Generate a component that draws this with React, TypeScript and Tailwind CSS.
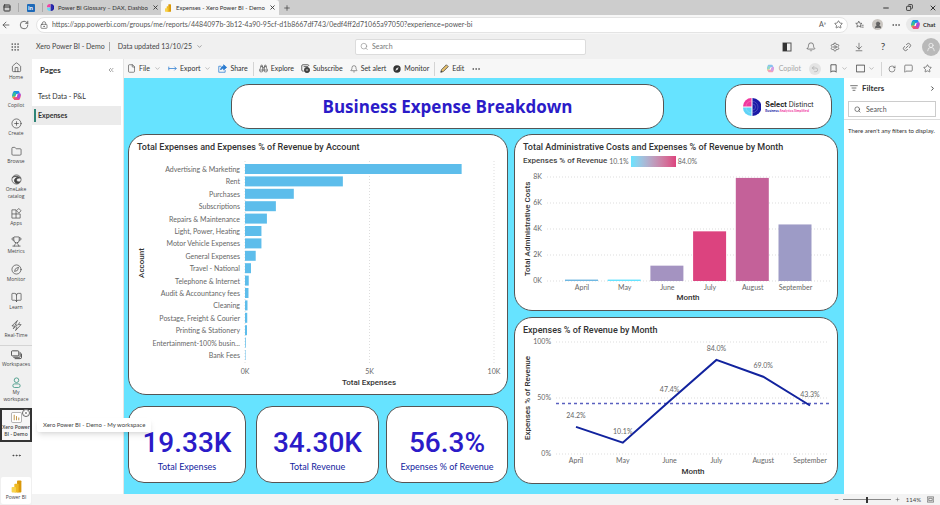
import type { ReactNode } from 'react'
import {
  ArrowDownToLine,
  ArrowLeft,
  Bell,
  Binoculars,
  BookOpen,
  ChevronDown,
  ChevronRight,
  ChevronsLeft,
  CirclePlus,
  Compass,
  Copy,
  File,
  Folder,
  Grip,
  House,
  Link2,
  ListFilter,
  LockKeyhole,
  MessageSquare,
  Minus,
  MoreHorizontal,
  PanelTop,
  Plus,
  RotateCw,
  Search,
  Settings,
  Star,
  Trophy,
  Undo2,
  UserRound,
  X,
} from 'lucide-react'

const accounts = [
  { name: 'Advertising & Marketing', value: 8700 },
  { name: 'Rent', value: 3930 },
  { name: 'Purchases', value: 1960 },
  { name: 'Subscriptions', value: 1240 },
  { name: 'Repairs & Maintenance', value: 880 },
  { name: 'Light, Power, Heating', value: 660 },
  { name: 'Motor Vehicle Expenses', value: 660 },
  { name: 'General Expenses', value: 430 },
  { name: 'Travel - National', value: 240 },
  { name: 'Telephone & Internet', value: 150 },
  { name: 'Audit & Accountancy fees', value: 140 },
  { name: 'Cleaning', value: 100 },
  { name: 'Postage, Freight & Courier', value: 90 },
  { name: 'Printing & Stationery', value: 80 },
  { name: 'Entertainment-100% busin...', value: 30 },
  { name: 'Bank Fees', value: 20 },
]

const months = [
  { name: 'April', cost: 110, percent: 24.2, color: '#6fb8e2' },
  { name: 'May', cost: 110, percent: 10.1, color: '#66e3ff' },
  { name: 'June', cost: 1180, percent: 47.4, color: '#a493c1' },
  { name: 'July', cost: 3820, percent: 84, color: '#dc437f' },
  { name: 'August', cost: 7930, percent: 69, color: '#c46199' },
  { name: 'September', cost: 4350, percent: 43.3, color: '#9d9bc6' },
]

function CopilotIcon({ className }: { className: string }) {
  return (
    <svg viewBox="0 0 24 24" className={className} aria-hidden="true">
      <path d="M8 2h7c2 0 3 1 3.500 3l.8 3h-5L12 14H3c-1-2 0-5 1-8s2-4 4-4Z" fill="#1b8fe8" />
      <path d="M3 13 6 5l5 1-3 11H5c-2 0-3-2-2-4Z" fill="#35c38f" />
      <path d="M3 14h7l-2 6c-3 0-5-2-5-6Z" fill="#f3b52c" />
      <path d="M16 22H9c-2 0-3-1-3.500-3l-.8-3h5l2.300-6h9c1 2 0 5-1 8s-2 4-4 4Z" fill="#ee4f7e" />
      <path d="m21 11-3 8-5-1 3-11h3c2 0 3 2 2 4Z" fill="#a64be0" />
      <path d="M11 9h3l-1.500 6h-3Z" fill="#fff" />
    </svg>
  )
}

function PowerBiIcon({ className }: { className: string }) {
  return (
    <svg viewBox="0 0 24 24" className={className} aria-hidden="true">
      <rect x="13" y="1" width="8" height="22" rx="1.500" fill="#d9980a" />
      <rect x="8" y="7" width="8" height="16" rx="1.500" fill="#efb820" />
      <rect x="3" y="13" width="8" height="10" rx="1.500" fill="#f8d34c" />
    </svg>
  )
}

function DistinctIcon({ className }: { className: string }) {
  return (
    <svg viewBox="0 0 18 18" className={className} aria-hidden="true">
      <path d="M8.500 0v8.500H0A8.500 8.500 0 0 1 8.500 0Z" fill="#f0399f" />
      <path d="M8.500 9.500V18A8.500 8.500 0 0 1 0 9.500Z" fill="#5fd3f7" />
      <path d="M9.500 0a9 9 0 0 1 0 18Z" fill="#1b1aa6" />
      <path
        d="M3 8.500A5.500 5.500 0 0 1 8.500 3M3 9.500A5.500 5.500 0 0 0 8.500 15M9.500 3.500a5.500 5.500 0 0 1 0 11M9.500 6a3 3 0 0 1 0 6"
        fill="none"
        stroke="#fff"
        strokeOpacity="0.4"
        strokeWidth="0.5"
      />
    </svg>
  )
}

function LineIcon({ className, children }: { className: string; children: ReactNode }) {
  return (
    <svg
      viewBox="0 0 24 24"
      className={className}
      fill="none"
      stroke="currentColor"
      strokeWidth="2"
      strokeLinejoin="round"
      aria-hidden="true"
    >
      {children}
    </svg>
  )
}

function BrowserTabs() {
  return (
    <div className="flex h-[15px] items-center bg-[#cdcdcd] text-[6px] text-[#333]">
      <button aria-label="Tab actions" className="flex w-[18px] pl-[3px]">
        <PanelTop className="size-2" strokeWidth={3} />
      </button>
      <span className="h-[9px] w-px bg-[#aaa]" />
      <button aria-label="LinkedIn" className="flex w-[23px] justify-center">
        <span className="flex size-2 items-center justify-center rounded-[1px] bg-[#1d69b8] text-[6px] leading-none font-bold text-white">
          in
        </span>
      </button>
      <span className="h-[9px] w-px bg-[#aaa]" />
      <div className="flex w-[118px] items-center gap-1 pl-1">
        <DistinctIcon className="size-[7px] shrink-0" />
        <span className="flex-1 whitespace-nowrap">Power BI Glossary – DAX, Dashbo</span>
        <button aria-label="Close tab" className="mr-1">
          <X className="size-[7px]" strokeWidth={3} />
        </button>
      </div>
      <div className="flex h-full w-[118px] items-center gap-1 rounded-t-[3px] bg-[#f7f7f7] pl-[3px]">
        <PowerBiIcon className="size-2 shrink-0" />
        <span className="flex-1 whitespace-nowrap">Expenses - Xero Power BI - Demo</span>
        <button aria-label="Close tab" className="mr-1">
          <X className="size-[7px]" strokeWidth={3} />
        </button>
      </div>
      <button aria-label="New tab" className="ml-1">
        <Plus className="size-2" />
      </button>
      <div className="ml-auto flex items-center gap-4 pr-[3px]">
        <button aria-label="Minimise">
          <Minus className="size-2" strokeWidth={3} />
        </button>
        <button aria-label="Restore">
          <Copy className="size-[7px] -scale-x-100" strokeWidth={3} />
        </button>
        <button aria-label="Close">
          <X className="size-2" strokeWidth={3} />
        </button>
      </div>
    </div>
  )
}

function AddressBar() {
  return (
    <div className="flex h-[19px] items-center bg-[#f7f7f7] text-[#555]">
      <button aria-label="Back" className="ml-px">
        <ArrowLeft className="size-[10px]" />
      </button>
      <button aria-label="Refresh" className="ml-2">
        <RotateCw className="size-[10px]" />
      </button>
      <div className="ml-[7px] flex h-4 flex-1 items-center rounded-full border border-[#e4e4e4] bg-white pr-1 pl-[3px]">
        <LockKeyhole className="size-2" />
        <input
          aria-label="Address"
          readOnly
          value="https://app.powerbi.com/groups/me/reports/4484097b-3b12-4a90-95cf-d1b8667df743/0edf4ff2d71065a97050?experience=power-bi"
          className="ml-1 flex-1 text-[7px] outline-none"
        />
        <span className="mr-2 text-[7px]">
          A<sup>»</sup>
        </span>
        <Star className="size-[9px]" />
      </div>
      <button aria-label="Favourites" className="ml-[7px]">
        <LineIcon className="size-[9px]">
          <path d="m10 3 2.500 5.500 6 .5-4.500 4 1.500 6L10 16l-5 3 1.500-6L2 9l5.500-.5ZM17 14h6M17 19h6" />
        </LineIcon>
      </button>
      <button aria-label="Profile" className="ml-2 flex size-[11px] items-center justify-center rounded-full bg-[#c9c5c0]">
        <UserRound className="size-2 fill-[#666]" />
      </button>
      <button aria-label="More" className="ml-2">
        <MoreHorizontal className="size-[10px]" />
      </button>
      <button className="ml-[5px] flex h-[15px] w-[34px] items-center gap-[2px] rounded-l-full bg-[#e9e9e9] pl-1 text-[6px] font-bold text-[#333]">
        <CopilotIcon className="size-[11px]" />
        Chat
      </button>
    </div>
  )
}

function AppHeader() {
  return (
    <header className="flex h-[25px] items-center bg-[#f0f0f0] text-[7px] text-[#444] [&_.lucide]:stroke-[1.5]">
      <div className="flex flex-1 items-center">
        <button aria-label="App launcher" className="ml-[10px]">
          <Grip className="size-[10px]" />
        </button>
        <span className="ml-4">Xero Power BI - Demo</span>
        <span className="ml-1 h-[9px] w-px bg-[#aaa]" />
        <button className="ml-2 flex items-center gap-1">
          Data updated 13/10/25
          <ChevronDown className="size-[7px]" />
        </button>
      </div>
      <label className="flex h-4 w-1/4 max-w-[231px] items-center gap-1 rounded-[2px] border border-[#dcdcdc] bg-white px-1 text-[#777]">
        <Search className="size-[9px]" />
        <input
          aria-label="Search"
          placeholder="Search"
          className="w-full text-[7px] outline-none placeholder:text-[#777]"
        />
      </label>
      <div className="flex flex-1 items-center justify-end gap-[14px] text-[#444]">
        <button aria-label="Toggle panel">
          <svg viewBox="0 0 10 10" className="size-[10px]">
            <rect x="1" y="1" width="8" height="8" fill="none" stroke="#555" />
            <rect x="1" y="1" width="4" height="8" fill="#333" />
          </svg>
        </button>
        <button aria-label="Notifications">
          <Bell className="size-[10px]" />
        </button>
        <button aria-label="Settings">
          <Settings className="size-[10px]" />
        </button>
        <button aria-label="Download">
          <ArrowDownToLine className="size-[10px]" />
        </button>
        <button className="w-[10px] text-[10px]">?</button>
        <button aria-label="Feedback">
          <Link2 className="size-[10px] -rotate-45" />
        </button>
        <button aria-label="Account" className="-ml-1 flex size-[18px] items-center justify-center rounded-full bg-[#b9b9b9] text-white">
          <UserRound className="size-[10px]" />
        </button>
      </div>
    </header>
  )
}

function NavItem({ icon, label, tall }: { icon: ReactNode; label: string; tall?: boolean }) {
  return (
    <li className={tall ? 'h-[34px]' : 'h-7'}>
      <a href="#" className="flex flex-col items-center gap-px pt-[3px]">
        {icon}
        <span className="text-center leading-[7px]">{label}</span>
      </a>
    </li>
  )
}

function SideNav() {
  return (
    <nav className="flex w-8 shrink-0 flex-col bg-[#f0f0f0] font-['Open_Sans',sans-serif] text-[5px] text-[#444]">
      <ul className="[&_svg]:stroke-[1.5]">
        <NavItem icon={<House className="size-[11px]" />} label="Home" />
        <NavItem icon={<CopilotIcon className="size-[11px]" />} label="Copilot" />
        <NavItem icon={<CirclePlus className="size-[11px]" />} label="Create" />
        <NavItem icon={<Folder className="size-[11px]" />} label="Browse" />
        <NavItem
          tall
          icon={
            <LineIcon className="size-[11px]">
              <circle cx="12" cy="12" r="10" />
              <path d="M3 8c5-5 13-4 18 1-5-1-9 1-9 4s4 5 8 4c-4 5-10 5-12 0S10 8 15 7C11 5 6 5 3 8Z" fill="currentColor" />
            </LineIcon>
          }
          label="OneLake catalog"
        />
        <NavItem
          icon={
            <LineIcon className="size-[11px]">
              <path d="M2 4h9v18H2ZM2 13h18v9h-9M17 1l5 5-5 5-5-5Z" />
            </LineIcon>
          }
          label="Apps"
        />
        <NavItem icon={<Trophy className="size-[11px]" />} label="Metrics" />
        <NavItem icon={<Compass className="size-[11px]" />} label="Monitor" />
        <NavItem icon={<BookOpen className="size-[11px]" />} label="Learn" />
        <NavItem
          icon={
            <LineIcon className="size-[11px]">
              <path d="M14 1 2 13h6l-3 6 9-8H9ZM19 5l-3 5h6L10 23l3-8" />
            </LineIcon>
          }
          label="Real-Time"
        />
      </ul>
      <ul className="border-t border-[#d4d4d4]">
        <NavItem
          icon={
            <LineIcon className="size-[11px]">
              <rect x="1" y="4" width="16" height="11" rx="2" />
              <path d="M5 18h13c2 0 2-1 2-2V7M8 21h12c2 0 3-1 3-3v-8" />
            </LineIcon>
          }
          label="Workspaces"
        />
        <NavItem
          tall
          icon={
            <LineIcon className="size-[11px] text-[#4c9d8b]">
              <circle cx="12" cy="7" r="5" />
              <rect x="4" y="15" width="16" height="8" rx="4" />
            </LineIcon>
          }
          label="My workspace"
        />
      </ul>
      <a
        href="#"
        className="relative flex h-[34px] flex-col items-center gap-px border-2 border-[#333] bg-[#f7f7f7] pt-[2px] font-semibold"
      >
        <svg viewBox="0 0 12 12" className="size-[11px]">
          <rect x="0.500" y="0.500" width="11" height="11" rx="1.500" fill="#fff" stroke="#aaa" />
          <path d="M3.500 9V3M6 9V4.500M8.500 9V6" stroke="#b98d3c" />
        </svg>
        <span className="text-center leading-[7px]">Xero Power BI - Demo</span>
        <span className="absolute -top-px right-0 flex size-2 items-center justify-center rounded-full border border-[#666] bg-white">
          <X className="size-1" strokeWidth={3} />
        </span>
        <span
          role="tooltip"
          className="absolute top-2 left-[35px] z-10 rounded-[2px] bg-white px-[6px] font-[Lato,sans-serif] text-[6px] leading-[14px] font-normal whitespace-nowrap shadow-md"
        >
          Xero Power BI - Demo - My workspace
        </span>
      </a>
      <button aria-label="More" className="mt-2 flex justify-center">
        <MoreHorizontal className="size-[11px]" />
      </button>
      <a href="#" className="mx-px mt-auto mb-px flex h-[27px] flex-col items-center justify-center gap-px rounded-[2px] bg-white leading-[7px]">
        <PowerBiIcon className="size-[13px]" />
        Power BI
      </a>
    </nav>
  )
}

function PagesPane() {
  return (
    <aside className="w-[92px] shrink-0 border-r border-[#e6e6e6] bg-white text-[7px] text-[#333]">
      <div className="flex h-[22px] items-center justify-between pr-2 pl-2">
        <h2 className="text-[8px] font-bold">Pages</h2>
        <button aria-label="Collapse pages">
          <ChevronsLeft className="size-2 text-[#777]" />
        </button>
      </div>
      <ul className="pt-[5px]">
        <li>
          <a href="#" className="flex h-5 items-center pl-[6px]">
            Test Data - P&amp;L
          </a>
        </li>
        <li>
          <a href="#" className="mr-[2px] flex h-[19px] items-center gap-[2px] bg-[#ebebeb] pl-[2px] font-bold">
            <span className="h-[13px] w-[2px] bg-[#2f8577]" />
            Expenses
          </a>
        </li>
      </ul>
    </aside>
  )
}

function Tool({ icon, label, menu }: { icon: ReactNode; label: string; menu?: boolean }) {
  return (
    <button className="flex items-center gap-[3px]">
      {icon}
      {label}
      {menu && <ChevronDown className="ml-px size-[7px] text-[#777]" />}
    </button>
  )
}

function Divider() {
  return <span className="-mx-[2px] h-[14px] w-px bg-[#d4d4d4]" />
}

function Toolbar() {
  return (
    <div className="flex h-[19px] items-center justify-between bg-[#f7f7f7] pr-2 pl-[3px] text-[7px] text-[#333] [&_.lucide]:stroke-[1.5]">
      <div className="flex items-center gap-[7px]">
        <Tool icon={<File className="size-[9px]" />} label="File" menu />
        <Tool
          icon={
            <LineIcon className="size-[9px] text-[#2a7bd0]">
              <path d="M2 7v10M2 12h20M17 7l5 5-5 5" />
            </LineIcon>
          }
          label="Export"
          menu
        />
        <Tool
          icon={
            <LineIcon className="size-[9px] text-[#2a7bd0]">
              <path d="M9 6H2v16h17v-6" />
              <path d="M15 2v4c-5 0-8 4-8 10 2-3 4-4 8-4v4l8-7Z" fill="currentColor" />
            </LineIcon>
          }
          label="Share"
        />
        <Divider />
        <Tool icon={<Binoculars className="size-[9px]" />} label="Explore" />
        <Tool
          icon={
            <LineIcon className="size-[9px]">
              <path d="M7 19H5c-2 0-3-1-3-3V5c0-2 1-3 3-3h13c2 0 3 1 3 3M7 7h12" />
              <circle cx="16" cy="16" r="7" fill="#444" />
              <path d="M13 16h6" stroke="#fff" />
            </LineIcon>
          }
          label="Subscribe"
        />
        <Tool icon={<Bell className="size-2" />} label="Set alert" />
        <Tool
          icon={
            <svg viewBox="0 0 24 24" className="size-2">
              <circle cx="12" cy="12" r="11" fill="#333" />
              <path d="m17 7-3 7-7 3 3-7Z" fill="#ddd" />
            </svg>
          }
          label="Monitor"
        />
        <Divider />
        <Tool
          icon={
            <svg viewBox="0 0 24 24" className="size-[9px]">
              <path d="M2 22 4 15 17 2l5 5L9 20Z" fill="#e5bf6c" stroke="#444" strokeWidth="2" strokeLinejoin="round" />
              <path d="m2 22 1-4 3 3Z" fill="#333" />
            </svg>
          }
          label="Edit"
        />
        <button aria-label="More">
          <MoreHorizontal className="size-[10px]" />
        </button>
      </div>
      <div className="flex items-center gap-2">
        <button disabled className="flex items-center gap-1 text-[#a5a5a5]">
          <CopilotIcon className="size-[9px] opacity-50" />
          Copilot
        </button>
        <button disabled aria-label="Reset" className="flex size-3 items-center justify-center rounded-full bg-[#e4e4e4] text-[#999]">
          <Undo2 className="size-2" />
        </button>
        <button aria-label="Bookmarks" className="flex items-center gap-[3px]">
          <LineIcon className="size-[9px]">
            <path d="M5 2h14v20l-3-3H8l-3 3Z" />
          </LineIcon>
          <ChevronDown className="size-[7px] text-[#777]" />
        </button>
        <button aria-label="View" className="flex items-center gap-[3px]">
          <LineIcon className="size-[9px]">
            <path d="M1 3h22v18H1Z" />
          </LineIcon>
          <ChevronDown className="size-[7px] text-[#777]" />
        </button>
        <Divider />
        <button aria-label="Refresh visuals">
          <RotateCw className="size-2" />
        </button>
        <button aria-label="Comment">
          <MessageSquare className="size-[9px]" />
        </button>
        <button aria-label="Favourite" className="ml-[2px]">
          <Star className="size-[9px]" />
        </button>
      </div>
    </div>
  )
}

function AccountChart() {
  const x = (value: number) => 116 + (value / 10000) * 249

  return (
    <svg viewBox="0 0 378 241" className="block w-full" role="img" aria-label="Total Expenses by Account">
      {[0, 5000, 10000].map((tick) => (
        <g key={tick}>
          <path d={`M${x(tick)} 8V210`} stroke="#ddd" strokeDasharray="1 2" />
          <text x={x(tick)} y="221" textAnchor="middle" fontSize="7" fill="#666">
            {tick / 1000}K
          </text>
        </g>
      ))}
      {accounts.map((account, index) => (
        <g key={account.name}>
          <text x="111" y={19 + index * 12.4} textAnchor="end" fontSize="7" fill="#666">
            {account.name}
          </text>
          <rect x="116" y={11 + index * 12.4} width={x(account.value) - 116} height="10" fill="#5dbdeb" />
        </g>
      ))}
      <g fill="#333" fontFamily="Roboto, sans-serif" fontWeight="500" fontSize="8" textAnchor="middle">
        <text x="240" y="232">
          Total Expenses
        </text>
        <text transform="translate(15 110) rotate(-90)">Account</text>
      </g>
    </svg>
  )
}

function CostChart() {
  const y = (value: number) => 112 - (value / 8000) * 104

  return (
    <svg viewBox="0 0 322 141" className="block w-full" role="img" aria-label="Total Administrative Costs by Month">
      {[0, 2000, 4000, 6000, 8000].map((tick) => (
        <g key={tick}>
          <path d={`M32 ${y(tick)}H315`} stroke="#ddd" strokeDasharray="1 2" />
          <text x="27" y={y(tick) + 2} textAnchor="end" fontSize="7" fill="#666">
            {tick / 1000}K
          </text>
        </g>
      ))}
      {months.map((month, index) => (
        <g key={month.name}>
          <rect x={50 + index * 42.7} y={y(month.cost)} width="33" height={112 - y(month.cost)} fill={month.color} />
          <text x={67 + index * 42.7} y="121" textAnchor="middle" fontSize="7" fill="#666">
            {month.name}
          </text>
        </g>
      ))}
      <g fill="#333" fontFamily="Roboto, sans-serif" fontWeight="500" fontSize="8" textAnchor="middle">
        <text x="173" y="131">
          Month
        </text>
        <text transform="translate(15 60) rotate(-90)">Total Administrative Costs</text>
      </g>
    </svg>
  )
}

function PercentChart() {
  const x = (index: number) => 61 + index * 46.8
  const y = (value: number) => 118 - (value / 100) * 112

  return (
    <svg viewBox="0 0 322 147" className="block w-full" role="img" aria-label="Expenses % of Revenue by Month">
      {[0, 50, 100].map((tick) => (
        <g key={tick}>
          <path d={`M41 ${y(tick)}H314`} stroke="#ddd" strokeDasharray="1 2" />
          <text x="36" y={y(tick) + 2} textAnchor="end" fontSize="7" fill="#666">
            {tick}%
          </text>
        </g>
      ))}
      <path d={`M41 ${y(45)}H314`} stroke="#5a60c0" strokeWidth="1.500" strokeDasharray="3 3" />
      <polyline
        points={months.map((month, index) => `${x(index)},${y(month.percent)}`).join(' ')}
        fill="none"
        stroke="#12239e"
        strokeWidth="2"
      />
      {months.map((month, index) => (
        <g key={month.name} textAnchor="middle" fontSize="7" fill="#666">
          <text x={x(index)} y={y(month.percent) - 9}>
            {month.percent.toFixed(1)}%
          </text>
          <text x={x(index)} y="127">
            {month.name}
          </text>
        </g>
      ))}
      <g fill="#333" fontFamily="Roboto, sans-serif" fontWeight="500" fontSize="8" textAnchor="middle">
        <text x="178" y="138">
          Month
        </text>
        <text transform="translate(15 62) rotate(-90)">Expenses % of Revenue</text>
      </g>
    </svg>
  )
}

function ChartCard({ title, children }: { title: string; children: ReactNode }) {
  return (
    <section className="overflow-hidden rounded-[18px] border border-[#555] bg-white">
      <h3 className="pt-[6px] pl-2 font-[Roboto,sans-serif] text-[9px] leading-3 font-medium text-[#333]">{title}</h3>
      {children}
    </section>
  )
}

function KpiCard({ value, label }: { value: string; label: string }) {
  return (
    <section className="flex h-[77px] flex-col items-center rounded-[16px] border border-[#555] bg-white pt-5">
      <p className="font-[Roboto,sans-serif] text-[28px] leading-8 font-medium text-[#2b1bc8]">{value}</p>
      <p className="text-[9px] leading-4 text-[#12239e]">{label}</p>
    </section>
  )
}

function ReportCanvas() {
  return (
    <main className="flex-1 bg-[#66e3ff] px-[6px] pt-[6px] pl-1">
      <div className="grid grid-cols-[103fr_433fr_61fr_107fr_6fr]">
        <h1 className="col-start-2 flex h-[45px] items-center justify-center rounded-[18px] border border-[#555] bg-white font-['Open_Sans',sans-serif] text-[17px] font-bold text-[#2b1bc8]">
          Business Expense Breakdown
        </h1>
        <div className="col-start-4 flex items-center justify-center gap-1 rounded-[18px] border border-[#555] bg-white">
          <DistinctIcon className="size-[18px]" />
          <div className="font-[Inter,sans-serif] text-[#222]">
            <p className="text-[7px] leading-[9px]">
              <b className="font-bold">Select</b> Distinct
            </p>
            <p className="text-[3px] leading-[4px] font-bold text-[#f0399f]">
              <span className="text-[#1b1aa6]">Business</span> Analytics Simplified
            </p>
          </div>
        </div>
      </div>
      <div className="mt-[5px] grid grid-cols-[380fr_324fr] items-start gap-[6px]">
        <div>
          <ChartCard title="Total Expenses and Expenses % of Revenue by Account">
            <AccountChart />
          </ChartCard>
          <div className="mt-[11px] grid grid-cols-[118fr_10fr_123fr_7fr_122fr]">
            <KpiCard value="19.33K" label="Total Expenses" />
            <span />
            <KpiCard value="34.30K" label="Total Revenue" />
            <span />
            <KpiCard value="56.3%" label="Expenses % of Revenue" />
          </div>
        </div>
        <div className="grid gap-[6px]">
          <ChartCard title="Total Administrative Costs and Expenses % of Revenue by Month">
            <div className="flex h-4 items-center gap-[2px] pl-2 text-[7px] text-[#666]">
              <span className="font-[Roboto,sans-serif] text-[8px] font-medium text-[#444]">Expenses % of Revenue</span>
              10.1%
              <span className="h-[11px] w-[45px] bg-linear-to-r from-[#66e3ff] to-[#dc437f]" />
              84.0%
            </div>
            <CostChart />
          </ChartCard>
          <ChartCard title="Expenses % of Revenue by Month">
            <PercentChart />
          </ChartCard>
        </div>
      </div>
    </main>
  )
}

function FiltersPane() {
  return (
    <aside className="w-24 shrink-0 bg-white text-[7px] text-[#333]">
      <div className="flex h-5 items-center gap-1 pr-1 pl-[6px]">
        <ListFilter className="size-2" />
        <h2 className="flex-1 text-[8px] font-bold">Filters</h2>
        <button aria-label="Collapse filters">
          <ChevronRight className="size-[7px]" strokeWidth={3} />
        </button>
      </div>
      <div className="border-b border-[#ddd] px-1 pt-[3px] pb-[2px]">
        <label className="flex h-4 items-center gap-[5px] border border-[#ccc] px-[5px]">
          <Search className="size-[7px] shrink-0" />
          <input aria-label="Search filters" placeholder="Search" className="w-full outline-none placeholder:text-[#555]" />
        </label>
      </div>
      <p className="pt-[7px] pl-1 text-[6px] leading-[8px] whitespace-nowrap">There aren't any filters to display.</p>
    </aside>
  )
}

function StatusBar() {
  return (
    <footer className="flex h-[11px] items-center justify-end gap-1 bg-[#f3f3f3] pr-[6px] text-[6px] text-[#444]">
      <button aria-label="Zoom out">
        <Minus className="size-[5px]" />
      </button>
      <input
        type="range"
        aria-label="Zoom"
        defaultValue="50"
        className="h-px w-[48px] appearance-none bg-[#888] [&::-webkit-slider-thumb]:h-[6px] [&::-webkit-slider-thumb]:w-[2px] [&::-webkit-slider-thumb]:appearance-none [&::-webkit-slider-thumb]:bg-[#333]"
      />
      <button aria-label="Zoom in">
        <Plus className="size-[5px]" />
      </button>
      <span className="ml-[2px]">114%</span>
      <button aria-label="Fit to page" className="ml-[2px]">
        <LineIcon className="size-[7px]">
          <path d="M1 3h22v18H1ZM6 8h12v8H6Z" />
        </LineIcon>
      </button>
    </footer>
  )
}

export default function App() {
  return (
    <div className="flex min-h-screen flex-col overflow-hidden bg-[#f3f3f3] font-[Lato,sans-serif]">
      <BrowserTabs />
      <AddressBar />
      <AppHeader />
      <div className="flex flex-1">
        <SideNav />
        <div className="flex min-w-0 flex-1 flex-col">
          <div className="flex flex-1">
            <PagesPane />
            <div className="flex min-w-0 flex-1 flex-col">
              <Toolbar />
              <div className="flex flex-1">
                <ReportCanvas />
                <FiltersPane />
              </div>
            </div>
          </div>
          <StatusBar />
        </div>
      </div>
    </div>
  )
}
